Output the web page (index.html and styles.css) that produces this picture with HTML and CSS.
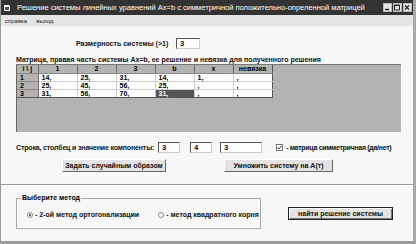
FILE: index.html
```html
<!DOCTYPE html>
<html lang="ru">
<head>
  <meta charset="UTF-8">
  <title>Решение системы линейных уравнений</title>
  <link rel="stylesheet" href="styles.css">
</head>
<body>
<div class="window">
  <div class="titlebar">
    <svg class="appicon" width="8" height="8" viewBox="0 0 8 8"><path d="M1 1h5l1 1v5H1z" fill="#eee"/><path d="M2 3h4v3H2z" fill="#555"/></svg>
    <span class="title">Решение системы линейных уравнений Ax=b с симметричной положительно-опреленной матрицей</span>
    <div class="winbtns">
      <span class="wbtn"><svg width="8" height="9" viewBox="0 0 8 9"><path d="M2 6.5h4" stroke="#222" stroke-width="1.4"/></svg></span>
      <span class="wbtn"><svg width="8" height="9" viewBox="0 0 8 9"><path d="M1.5 2h5v5h-5z M1.5 2.6h5" fill="none" stroke="#222" stroke-width="1"/></svg></span>
      <span class="wbtn"><svg width="8" height="9" viewBox="0 0 8 9"><path d="M2 2.5l4 4M6 2.5l-4 4" stroke="#222" stroke-width="1.3"/></svg></span>
    </div>
  </div>
  <div class="menubar"><span>справка</span><span>выход</span></div>

  <div class="content">
    <div class="dim-row">
      <span class="lbl">Размерность системы (&gt;1)</span>
      <span class="edit w23">3</span>
    </div>
    <div class="caption">Матрица, правая часть системы Ax=b, ее решение и невязка для полученного решения</div>
    <div class="grid">
      <table>
        <tr class="hdr"><th class="rh">i \ j</th><th>1</th><th>2</th><th>3</th><th>b</th><th>x</th><th>невязка</th></tr>
        <tr><th class="rh">1</th><td>14,</td><td>25,</td><td>31,</td><td>14,</td><td>1,</td><td>,</td></tr>
        <tr><th class="rh">2</th><td>25,</td><td>45,</td><td>56,</td><td>25,</td><td>,</td><td>,</td></tr>
        <tr><th class="rh">3</th><td>31,</td><td>56,</td><td>70,</td><td class="sel">31,</td><td>,</td><td>,</td></tr>
      </table>
    </div>
    <div class="comp-row">
      <span class="lbl tight">Строка, столбец и значение компоненты:</span>
      <span class="edit w22 e1">3</span>
      <span class="edit w22 e2">4</span>
      <span class="edit w42 e3">3</span>
      <span class="check">
        <svg width="7" height="7" viewBox="0 0 7 7"><rect x="0.5" y="0.5" width="6" height="6" fill="#fff" stroke="#777"/><path d="M1.5 3.5l1.5 1.5 2.5-3" fill="none" stroke="#333" stroke-width="1"/></svg>
        <span class="lbl tighter">- матрица симметричная (да/нет)</span>
      </span>
    </div>
    <div class="btn-row">
      <span class="btn b-rand">Задать случайным образом</span>
      <span class="btn b-mul">Умножить систему на A(т)</span>
    </div>
  </div>

  <div class="sep"></div>

  <div class="bottom">
    <div class="group">
      <span class="legend">Выберите метод</span>
      <span class="radio"><svg width="6" height="6" viewBox="0 0 6 6"><circle cx="3" cy="3" r="2.5" fill="#fff" stroke="#888"/><circle cx="3" cy="3" r="1" fill="#333"/></svg><span class="lbl">- 2-ой метод ортогонализации</span></span>
      <span class="radio r2"><svg width="6" height="6" viewBox="0 0 6 6"><circle cx="3" cy="3" r="2.5" fill="#fff" stroke="#888"/></svg><span class="lbl">- метод квадратного корня</span></span>
    </div>
    <span class="btn b-find">найти решение системы</span>
  </div>
</div>
</body>
</html>
```

FILE: styles.css
```css
* { box-sizing: border-box; }
body { margin: 0; background: #f6f6f6; font-family: "Liberation Sans", Arial, sans-serif; }
.window {
  width: 416px;
  height: 244px;
  position: relative;
  background: #f7f7f7;
  border-left: 1px solid #9a9a9a;
  border-right: 3px solid #a8a8a8;
  border-bottom: 3px solid #9a9a9a;
  overflow: hidden;
}
.titlebar {
  height: 15px;
  background: #333;
  color: #fff;
  display: flex;
  align-items: center;
  padding-left: 3px;
  margin-left: -1px;
  margin-right: -3px;
}
.appicon { flex: none; margin-right: 6px; }
.title { font-size: 7.6px; white-space: nowrap; min-width: 0; letter-spacing: -0.05px; }
.winbtns { flex: none; margin-left: auto; display: flex; gap: 1px; padding-right: 4px; }
.wbtn { width: 9px; height: 9px; background: #e4e4e4; border: 1px solid #bbb; display: flex; }
.wbtn svg { display: block; margin: -1px; }
.menubar {
  height: 11px;
  background: #e4e4e4;
  font-size: 6px;
  display: flex;
  align-items: center;
  gap: 9px;
  padding-left: 4px;
  color: #222;
}
.content { padding-left: 15px; }
.lbl { font-size: 7px; font-weight: bold; color: #111; white-space: nowrap; }
.tight { letter-spacing: -0.15px; }
.tighter { letter-spacing: -0.3px; }
.edit {
  height: 11px;
  background: #fff;
  border: 1px solid #555;
  border-right-color: #ccc;
  border-bottom-color: #ccc;
  font-size: 7px;
  font-weight: bold;
  padding-left: 3px;
  line-height: 9px;
}
.w23 { width: 24px; }
.w22 { width: 22px; }
.w42 { width: 42px; }
.dim-row { display: flex; align-items: center; gap: 8px; margin-top: 12px; padding-left: 60px; }
.caption { font-size: 7px; font-weight: bold; margin-top: 6px; height: 9px; line-height: 9px; color: #111; }
.grid {
  width: 385px;
  height: 68px;
  background: #b3b3b3;
  border-left: 1px solid #666;
  border-top: 1px solid #777;
}
.grid table { border-collapse: collapse; font-size: 7px; font-weight: bold; }
.grid th, .grid td {
  height: 8px;
  padding: 0 0 0 3px;
  line-height: 7px;
  border-right: 1px solid #666;
  border-bottom: 1px solid #888;
  text-align: left;
  width: 39px;
}
.grid td { background: #fff; border-right-color: #ccc; border-bottom-color: #ccc; }
.grid th { background: #b3b3b3; font-weight: bold; }
.grid .hdr th { text-align: center; padding: 0; }
.grid .rh { width: 21px; text-align: left; padding-left: 3px; }
.grid .hdr th:last-child { border-right: 1px solid #555; }
.grid td:last-child { border-right: 1px solid #555; }
.grid tr:last-child td, .grid tr:last-child th { border-bottom: 1px solid #555; }
.grid td.sel { background: #555; color: #fff; }
.comp-row { display: flex; align-items: center; margin-top: 10px; }
.e1 { margin-left: 4px; }
.e2 { margin-left: 10px; }
.e3 { margin-left: 8px; }
.check { display: flex; align-items: center; gap: 3px; margin-left: 14px; }
.check svg { display: block; }
.btn-row { display: flex; margin-top: 6px; }
.btn {
  height: 13px;
  background: #e3e3e3;
  border: 1px solid #fff;
  border-right-color: #666;
  border-bottom-color: #666;
  font-size: 7px;
  font-weight: bold;
  display: flex;
  align-items: center;
  justify-content: center;
  color: #111;
  white-space: nowrap;
}
.b-rand { width: 104px; margin-left: 46px; }
.b-mul { width: 109px; margin-left: 58px; }
.sep { height: 2px; border-top: 1px solid #999; border-bottom: 1px solid #fff; margin-top: 12px; }
.bottom { display: flex; align-items: flex-start; padding-left: 15px; margin-top: 12px; }
.group {
  width: 245px;
  height: 31px;
  border: 1px solid #aaa;
  box-shadow: inset -1px -1px 0 #fff;
  position: relative;
  display: flex;
  align-items: center;
  padding-left: 10px;
  padding-top: 2px;
}
.legend {
  position: absolute;
  left: 4px;
  top: -5px;
  background: #f7f7f7;
  padding: 0 1px;
  font-size: 7px;
  font-weight: bold;
}
.radio { display: flex; align-items: center; gap: 2px; }
.radio svg { display: block; }
.r2 { margin-left: 19px; }
.b-find {
  width: 105px;
  margin-left: 27px;
  margin-top: 9px;
  border: 1px solid #222;
  box-shadow: inset 1px 1px 0 #fff, inset -1px -1px 0 #777;
}
```
